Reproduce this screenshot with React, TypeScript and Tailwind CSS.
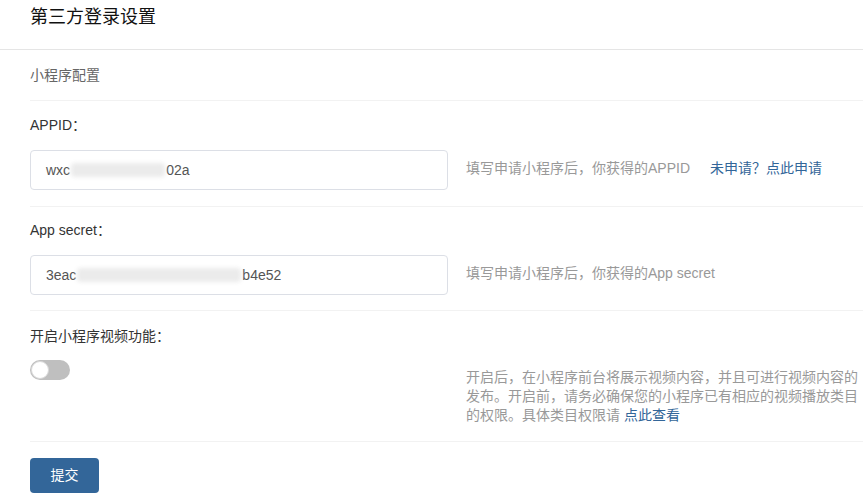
import { useState } from "react";

const font = {
  fontFamily: '"Liberation Sans", "Noto Sans CJK SC", sans-serif',
};

function Masked({ head, tail, width }: { head: string; tail: string; width: number }) {
  return (
    <div className="flex h-[40px] items-center rounded-[4px] border border-[#dcdfe6] bg-white px-[15px] text-[14px] text-[#555]">
      <span>{head}</span>
      <span
        className="mx-[1px] inline-block h-[14px] rounded-sm bg-[#ebebeb] blur-[2px]"
        style={{ width }}
      />
      <span>{tail}</span>
    </div>
  );
}

export default function App() {
  const [video, setVideo] = useState(false);

  return (
    <div className="min-h-screen w-[863px] bg-white text-[#333]" style={font}>
      {/* Header */}
      <div className="h-[50px] border-b border-[#e5e5e5] px-[30px]">
        <h1 className="text-[18px] leading-[34px] text-[#111]">第三方登录设置</h1>
      </div>

      <div className="pl-[30px]">
        <div className="flex h-[51px] items-center border-b border-[#f2f2f2] text-[14px] text-[#666]">
          小程序配置
        </div>

        {/* APPID */}
        <div className="border-b border-[#f2f2f2] pt-[14px] pb-[16px]">
          <div className="text-[14px] leading-[20px]">APPID：</div>
          <div className="mt-[15px] flex items-start">
            <div className="w-[418px]">
              <Masked head="wxc" tail="02a" width={94} />
            </div>
            <div className="ml-[18px] pt-[9px] text-[14px] leading-[19px] text-[#999]">
              填写申请小程序后，你获得的APPID
              <a href="#" className="ml-5 text-[#336699]">
                未申请？点此申请
              </a>
            </div>
          </div>
        </div>

        {/* App secret */}
        <div className="border-b border-[#f2f2f2] pt-[13px] pb-[15px]">
          <div className="text-[14px] leading-[20px]">App secret：</div>
          <div className="mt-[15px] flex items-start">
            <div className="w-[418px]">
              <Masked head="3eac" tail="b4e52" width={164} />
            </div>
            <div className="ml-[18px] pt-[9px] text-[14px] leading-[19px] text-[#999]">
              填写申请小程序后，你获得的App secret
            </div>
          </div>
        </div>

        {/* Video switch */}
        <div className="border-b border-[#f2f2f2] pt-[15px] pb-[16px]">
          <div className="text-[14px] leading-[20px]">开启小程序视频功能：</div>
          <div className="mt-[14px] flex items-start">
            <div className="w-[418px]">
              <button
                type="button"
                onClick={() => setVideo(!video)}
                className={`flex h-[20px] w-[40px] items-center rounded-full px-[1px] ${
                  video ? "justify-end bg-[#336699]" : "justify-start bg-[#bfbfbf]"
                }`}
              >
                <span className="h-[18px] w-[18px] rounded-full border border-[#d9d9d9] bg-white" />
              </button>
            </div>
            <p className="ml-[18px] flex-1 pt-[8px] text-[14px] leading-[19px] text-[#999]">
              开启后，在小程序前台将展示视频内容，并且可进行视频内容的发布。开启前，请务必确保您的小程序已有相应的视频播放类目的权限。具体类目权限请{" "}
              <a href="#" className="text-[#336699]">
                点此查看
              </a>
            </p>
          </div>
        </div>

        <div className="pt-[16px]">
          <button
            type="button"
            className="h-[35px] w-[69px] rounded-[4px] bg-[#336699] text-[14px] text-white"
          >
            提交
          </button>
        </div>
      </div>
    </div>
  );
}
